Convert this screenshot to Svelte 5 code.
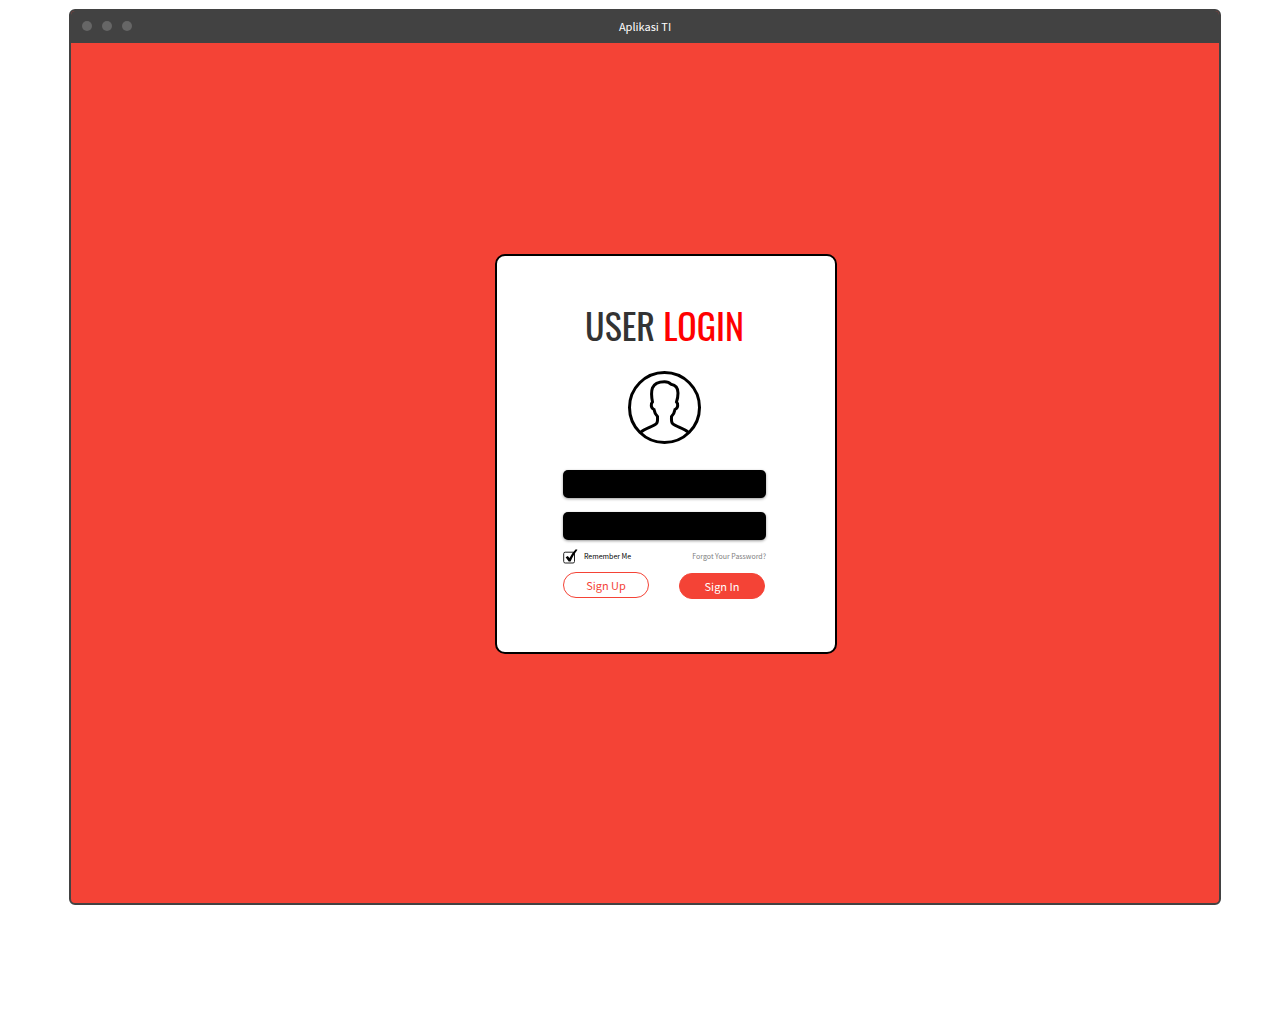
<script>
  let username = $state('');
  let password = $state('');
  let remember = $state(true);
</script>

<main class="window">
  <header class="titlebar">
    <div class="dots" aria-hidden="true"><span></span><span></span><span></span></div>
    <div class="caption">Aplikasi TI</div>
  </header>

  <section class="stage">
    <form class="card" onsubmit={(e) => e.preventDefault()}>
      <h1>USER <span>LOGIN</span></h1>

      <svg class="avatar" viewBox="0 0 73 73" aria-hidden="true">
        <circle cx="36.5" cy="36.5" r="35" />
        <path d="M12.5 61.5C17 57 25 56 28.500 52.500C30 51 29.500 48 29.500 45.500C27.500 43.500 26.500 41.500 26 38.500C24 37.500 23 35 23.500 32.500L24.500 31C23.500 26 23 21 24.500 16.800C26.500 12 31 10.700 36.500 10.700C40 10.700 41.500 11.500 43 13.200C48 14 50 17 50 22C50 25 49.500 28 48.500 31L49.500 32.500C50 35 49 37.500 47 38.500C46.500 41.500 45.500 43.500 43.500 45.500C43.500 48 43 51 44.500 52.500C48 56 56 57 60.500 61.500" />
      </svg>

      <div class="fields">
        <input class="field" type="text" aria-label="Username" autocomplete="username" bind:value={username} />
        <input class="field" type="password" aria-label="Password" autocomplete="current-password" bind:value={password} />
      </div>

      <div class="options">
        <label class="remember">
          <span class="tick">
            <input type="checkbox" bind:checked={remember} />
            <svg viewBox="0 0 15 15" aria-hidden="true">
              <rect x="0.7" y="3.2" width="10.800" height="10.800" rx="1.500" />
              {#if remember}
                <path d="M2.600 8.300L4.800 6.900L6.500 9C8.200 5.800 10.300 2.500 12.800 0.200L14.500 0.800C11.800 4.400 9.500 8.200 7.600 12.400L5.700 12.400Z" />
              {/if}
            </svg>
          </span>
          Remember Me
        </label>
        <a href="#forgot">Forgot Your Password?</a>
      </div>

      <div class="actions">
        <button class="outline" type="button">Sign Up</button>
        <button class="solid" type="submit">Sign In</button>
      </div>
    </form>
  </section>
</main>

<style>
  :global(body) {
    background: #fff;
    font-family: 'Noto Sans CJK SC', 'Noto Sans', sans-serif;
  }
  .window {
    box-sizing: border-box;
    display: flex;
    flex-direction: column;
    min-height: calc(100vh - 118px);
    margin: 9px 50px 0 69px;
    border: 2px solid #424242;
    border-radius: 6px;
    background: #f44336;
    overflow: hidden;
  }
  .titlebar {
    box-sizing: border-box;
    display: grid;
    grid-template-columns: 1fr auto 1fr;
    align-items: center;
    height: 32px;
    padding-bottom: 2px;
    background: #424242;
    color: #fff;
    font-size: 11px;
    line-height: 18px;
  }
  .dots {
    display: flex;
    gap: 10px;
    padding-left: 11px;
  }
  .dots span {
    width: 10px;
    height: 10px;
    border-radius: 50%;
    background: #666;
  }
  .stage {
    flex: 1;
    display: flex;
    align-items: center;
    justify-content: center;
    padding: 0 0 38px 42px;
  }
  .card {
    box-sizing: border-box;
    width: 342px;
    padding: 45px 69px 53px 66px;
    border: 2px solid #000;
    border-radius: 10px;
    background: #fff;
  }
  h1 {
    margin: 0 0 22px;
    color: #333;
    font-family: Oswald, 'Liberation Sans Narrow', sans-serif;
    font-size: 36px;
    font-weight: 400;
    line-height: 48px;
    text-align: center;
    white-space: nowrap;
  }
  h1 span {
    color: #f00;
  }
  .avatar {
    display: block;
    width: 73px;
    height: 73px;
    margin: 0 auto 26px;
    fill: none;
    stroke: #000;
    stroke-width: 3;
  }
  .fields {
    display: grid;
    gap: 14px;
  }
  .field {
    box-sizing: border-box;
    width: 100%;
    height: 28px;
    padding: 0 8px;
    border: 0;
    border-radius: 5px;
    background: #000;
    color: #fff;
    font: inherit;
    font-size: 11px;
    box-shadow: 0 1px 3px rgba(0, 0, 0, 0.4);
  }
  .options {
    display: flex;
    align-items: center;
    justify-content: space-between;
    height: 15px;
    margin: 9px 0 8px;
    font-size: 7px;
    line-height: 15px;
    white-space: nowrap;
  }
  .remember {
    display: flex;
    align-items: center;
    gap: 6px;
    color: #000;
  }
  .tick {
    position: relative;
    width: 15px;
    height: 15px;
  }
  .tick input {
    position: absolute;
    inset: 0;
    width: 15px;
    height: 15px;
    margin: 0;
    opacity: 0;
  }
  .tick svg {
    display: block;
    width: 15px;
    height: 15px;
  }
  .tick rect {
    fill: none;
    stroke: #222;
  }
  a {
    color: #808080;
    text-decoration: none;
  }
  .actions {
    display: flex;
    justify-content: space-between;
    padding-right: 1px;
  }
  button {
    box-sizing: border-box;
    width: 86px;
    height: 26px;
    padding: 0;
    border: 1px solid #f44336;
    border-radius: 13px;
    font: inherit;
    font-size: 11px;
    line-height: 18px;
  }
  .outline {
    background: #fff;
    color: #f44336;
  }
  .solid {
    margin-top: 1px;
    background: #f44336;
    color: #fff;
  }
</style>
